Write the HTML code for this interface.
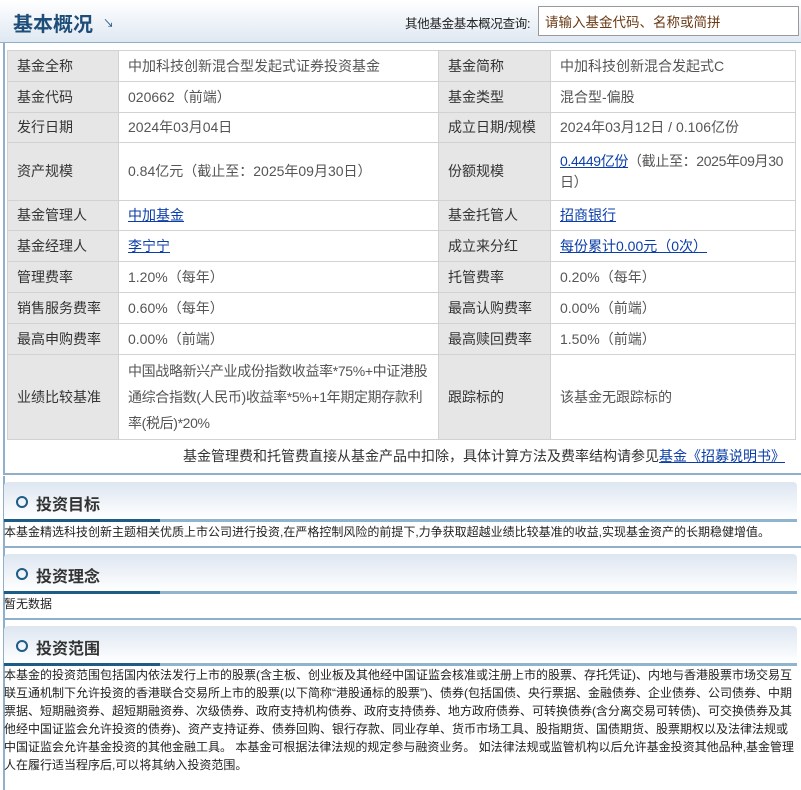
<!DOCTYPE html>
<html><head><meta charset="utf-8"><style>
*{margin:0;padding:0;box-sizing:border-box}
body{width:801px;height:786px;overflow:hidden;background:#fff;font-family:"Liberation Sans","Noto Sans CJK SC",sans-serif;color:#333;position:relative}
.hdr{position:absolute;left:0;top:0;width:801px;height:43px;background:linear-gradient(#fff,#dfe8f2);border-bottom:1px solid #8fb0c8}
.hdr h1{position:absolute;left:13px;top:8px;font-size:20px;color:#1d4d78;font-weight:bold}
.hdr .ar{position:absolute;left:103px;top:15px;font-size:11px;color:#1d4d78}
.hdr .q{position:absolute;left:405px;top:13px;font-size:12.5px;color:#222;letter-spacing:-0.3px}
.hdr input{position:absolute;left:538px;top:6px;width:261px;height:30px;border:1px solid #999;font-size:13.5px;padding-left:6px;font-family:inherit;color:#6b3a14}
.box{position:absolute;left:3px;top:43px;width:810px;height:432px;border-left:2px solid #8fb0c8;border-bottom:2px solid #8fb0c8}
table{position:absolute;left:7px;top:50px;border-collapse:collapse;font-size:14px}
td{border:1px solid #d2d2d2;padding:0 4px 0 9px;color:#555;line-height:21px}
td.l{background:#e6e6e6;color:#333}
td.w{letter-spacing:-0.35px}
a{color:#0b3ea8;text-decoration:underline}
.note{position:absolute;left:183px;top:446px;font-size:14px;color:#333}
.sec{position:absolute;left:3px;width:810px;border-left:2px solid #8fb0c8;border-bottom:2px solid #8fb0c8}
.sh{position:absolute;left:4px;width:793px;height:40px;background:linear-gradient(#dde6f1,#fff);border-radius:4px 4px 0 0;border-bottom:3px solid #8fb4ce}
.sh::after{content:"";position:absolute;left:0;bottom:-3px;width:156px;height:3px;background:#1d5c86}
.sh .c{position:absolute;left:12px;top:14px;width:12px;height:12px;border:2.5px solid #1d5c86;border-radius:50%}
.sh b{position:absolute;left:32px;top:9px;font-size:16px;color:#333}
.st{position:absolute;left:4px;font-size:12px;line-height:18px;color:#222;width:795px}
</style></head><body>
<div class="hdr"><h1>基本概况</h1><span class="ar">↘</span><span class="q">其他基金基本概况查询:</span><input value="请输入基金代码、名称或简拼"></div>
<div class="box"></div>
<table>
<colgroup><col style="width:111px"><col style="width:320px"><col style="width:112px"><col style="width:245px"></colgroup>
<tr style="height:31px"><td class="l">基金全称</td><td>中加科技创新混合型发起式证券投资基金</td><td class="l">基金简称</td><td>中加科技创新混合发起式C</td></tr>
<tr style="height:31px"><td class="l">基金代码</td><td>020662（前端）</td><td class="l">基金类型</td><td>混合型-偏股</td></tr>
<tr style="height:30px"><td class="l">发行日期</td><td>2024年03月04日</td><td class="l">成立日期/规模</td><td>2024年03月12日 / 0.106亿份</td></tr>
<tr style="height:58px"><td class="l">资产规模</td><td>0.84亿元（截止至：2025年09月30日）</td><td class="l">份额规模</td><td class="w"><a>0.4449亿份</a>（截止至：2025年09月30日）</td></tr>
<tr style="height:30px"><td class="l">基金管理人</td><td><a>中加基金</a></td><td class="l">基金托管人</td><td><a>招商银行</a></td></tr>
<tr style="height:31px"><td class="l">基金经理人</td><td><a>李宁宁</a></td><td class="l">成立来分红</td><td><a>每份累计0.00元（0次）</a></td></tr>
<tr style="height:31px"><td class="l">管理费率</td><td>1.20%（每年）</td><td class="l">托管费率</td><td>0.20%（每年）</td></tr>
<tr style="height:31px"><td class="l">销售服务费率</td><td>0.60%（每年）</td><td class="l">最高认购费率</td><td>0.00%（前端）</td></tr>
<tr style="height:31px"><td class="l">最高申购费率</td><td>0.00%（前端）</td><td class="l">最高赎回费率</td><td>1.50%（前端）</td></tr>
<tr style="height:85px"><td class="l">业绩比较基准</td><td class="w" style="line-height:26px">中国战略新兴产业成份指数收益率*75%+中证港股通综合指数(人民币)收益率*5%+1年期定期存款利率(税后)*20%</td><td class="l">跟踪标的</td><td>该基金无跟踪标的</td></tr>
</table>
<div class="note">基金管理费和托管费直接从基金产品中扣除，具体计算方法及费率结构请参见<a>基金《招募说明书》</a></div>

<div class="sec" style="top:476px;height:72px"></div>
<div class="sh" style="top:482px"><span class="c"></span><b>投资目标</b></div>
<div class="st" style="top:523px">本基金精选科技创新主题相关优质上市公司进行投资,在严格控制风险的前提下,力争获取超越业绩比较基准的收益,实现基金资产的长期稳健增值。</div>

<div class="sec" style="top:548px;height:72px"></div>
<div class="sh" style="top:554px"><span class="c"></span><b>投资理念</b></div>
<div class="st" style="top:595px">暂无数据</div>

<div class="sec" style="top:620px;height:170px;border-bottom:none"></div>
<div class="sh" style="top:626px"><span class="c"></span><b>投资范围</b></div>
<div class="st" style="top:666px">本基金的投资范围包括国内依法发行上市的股票(含主板、创业板及其他经中国证监会核准或注册上市的股票、存托凭证)、内地与香港股票市场交易互联互通机制下允许投资的香港联合交易所上市的股票(以下简称“港股通标的股票”)、债券(包括国债、央行票据、金融债券、企业债券、公司债券、中期票据、短期融资券、超短期融资券、次级债券、政府支持机构债券、政府支持债券、地方政府债券、可转换债券(含分离交易可转债)、可交换债券及其他经中国证监会允许投资的债券)、资产支持证券、债券回购、银行存款、同业存单、货币市场工具、股指期货、国债期货、股票期权以及法律法规或中国证监会允许基金投资的其他金融工具。 本基金可根据法律法规的规定参与融资业务。 如法律法规或监管机构以后允许基金投资其他品种,基金管理人在履行适当程序后,可以将其纳入投资范围。</div>
</body></html>
